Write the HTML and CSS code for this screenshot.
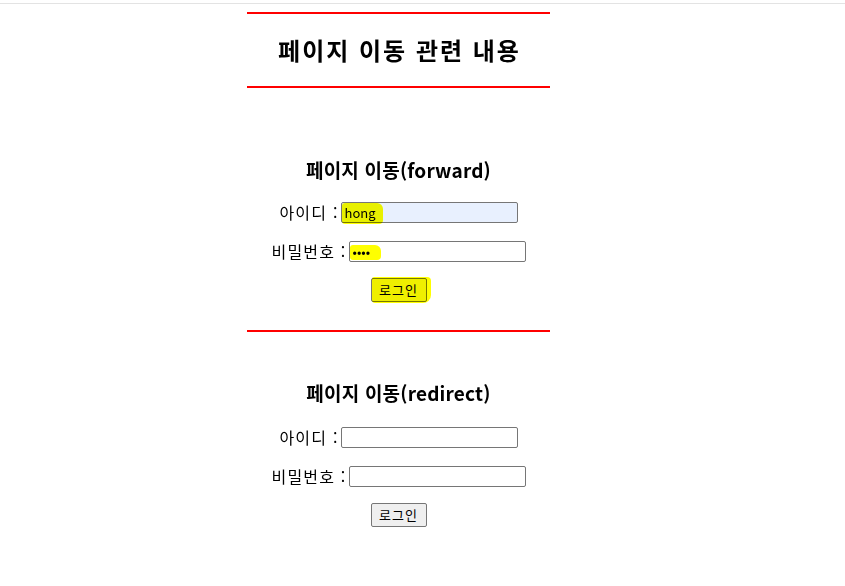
FILE: index.html
```html
<!DOCTYPE html>
<html lang="ko">
<head>
<meta charset="utf-8">
<title>페이지 이동</title>
<link rel="stylesheet" href="styles.css">
</head>
<body>
<div class="topline"></div>
<div class="page">
  <div class="header">
    <h1 class="title">페이지 이동 관련 내용</h1>
  </div>
  <div class="section section-forward">
    <h2 class="sub">페이지 이동(forward)</h2>
    <div class="row"><span class="label">아이디 :</span><span class="field"><input class="inp autofill" type="text" value="hong"><span class="mark mark-id"></span></span></div>
    <div class="row"><span class="label">비밀번호 :</span><span class="field"><input class="inp" type="password" value="1234"><span class="mark mark-pw"></span></span></div>
    <div class="row row-btn"><span class="field"><button class="btn" type="button">로그인</button><span class="mark mark-btn"></span></span></div>
  </div>
  <div class="section section-redirect">
    <h2 class="sub">페이지 이동(redirect)</h2>
    <div class="row"><span class="label">아이디 :</span><span class="field"><input class="inp" type="text"></span></div>
    <div class="row"><span class="label">비밀번호 :</span><span class="field"><input class="inp" type="password"></span></div>
    <div class="row row-btn"><span class="field"><button class="btn" type="button">로그인</button></span></div>
  </div>
</div>
</body>
</html>
```
FILE: styles.css
```css
html, body {
  margin: 0;
  padding: 0;
  background: #ffffff;
}
body {
  font-family: "Noto Sans CJK KR", "Noto Sans", sans-serif;
  color: #000;
}
.topline {
  height: 3px;
  border-bottom: 1px solid #e3e3e3;
}
.page {
  width: 303px;
  margin-left: 247px;
  padding-top: 8px;
}
.header {
  border-top: 2px solid #ff0000;
  border-bottom: 2px solid #ff0000;
  height: 72px;
  display: flex;
  align-items: center;
  justify-content: center;
}
.title {
  margin: 0 0 0 2px;
  font-size: 24px;
  font-weight: bold;
  line-height: 30px;
  letter-spacing: 2px;
}
.section {
  display: flex;
  flex-direction: column;
  align-items: center;
}
.section-forward {
  padding-top: 68px;
  height: 174px;
  border-bottom: 2px solid #ff0000;
}
.section-redirect {
  padding-top: 47px;
}
.sub {
  margin: 0;
  font-size: 19px;
  font-weight: bold;
  line-height: 28px;
  height: 28px;
  letter-spacing: 0.2px;
}
.row {
  font-size: 16px;
  line-height: 21px;
  height: 21px;
  display: flex;
  align-items: flex-start;
  justify-content: center;
  margin-top: 18px;
}
.section-redirect .sub + .row {
  margin-top: 20px;
}
.row-btn {
  height: 24px;
  margin-top: 16px;
}
.label {
  letter-spacing: 1.2px;
  margin-right: 2px;
  white-space: nowrap;
}
.field {
  position: relative;
  display: flex;
}
.inp {
  box-sizing: border-box;
  width: 177px;
  height: 21px;
  margin: 0;
  padding: 1px 3px;
  border: 1px solid #767676;
  border-radius: 2px;
  font-family: "Noto Sans CJK KR", "Liberation Sans", sans-serif;
  font-size: 13px;
  background: #fff;
}
.autofill {
  background: #e8f0fe;
}
.btn {
  box-sizing: border-box;
  width: 56px;
  height: 24px;
  margin: 0;
  padding: 0 6px;
  border: 1px solid #767676;
  border-radius: 2px;
  background: #efefef;
  font-family: "Noto Sans CJK KR", sans-serif;
  font-size: 13px;
  line-height: 20px;
  letter-spacing: 1px;
  color: #000;
}
.mark {
  position: absolute;
  background: #ffff00;
  mix-blend-mode: multiply;
  border-radius: 3px 6px 4px 3px;
  pointer-events: none;
}
.mark-id {
  left: 1px;
  top: 1px;
  width: 41px;
  height: 21px;
}
.mark-pw {
  left: 1px;
  top: 4px;
  width: 31px;
  height: 15px;
}
.mark-btn {
  left: 1px;
  top: -1px;
  width: 59px;
  height: 26px;
  border-radius: 2px 4px 8px 3px;
}
```
